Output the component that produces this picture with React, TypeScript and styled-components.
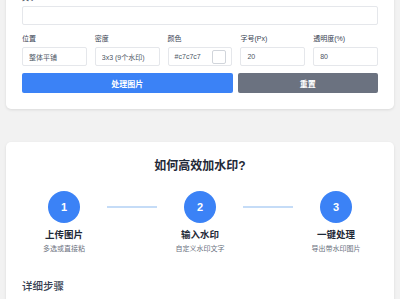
import { Fragment } from "react";
import styled, { createGlobalStyle } from "styled-components";

const GlobalStyle = createGlobalStyle`
  body {
    margin: 0;
    background: #f2f2f2;
    font-family: "Liberation Sans", "Noto Sans CJK SC", sans-serif;
    overflow: hidden;
  }
`;

const Page = styled.div`
  padding: 0 6px;
`;

const Card = styled.section<{ $top?: number }>`
  margin-top: ${(p) => p.$top ?? 0}px;
  background: #ffffff;
  border-radius: 5px;
  box-shadow: 0 1px 3px rgba(0, 0, 0, 0.1);
  padding: 16px;
`;

const Label = styled.div`
  font-size: 7px;
  line-height: 10px;
  color: #374151;
  margin-bottom: 3px;
`;

const TextBox = styled.input`
  box-sizing: border-box;
  display: block;
  width: 100%;
  height: 19px;
  padding: 0 6px;
  border: 1px solid #e5e7eb;
  border-radius: 2px;
  font-family: inherit;
  font-size: 7px;
  color: #4b5563;
  background: #fff;
  outline: none;
`;

const ColorBox = styled.div`
  box-sizing: border-box;
  display: flex;
  align-items: center;
  justify-content: space-between;
  height: 19px;
  padding: 0 5px 0 6px;
  border: 1px solid #e5e7eb;
  border-radius: 2px;
  font-size: 7px;
  color: #4b5563;
`;

const Swatch = styled.span<{ $color: string }>`
  width: 12px;
  height: 12px;
  border: 1px solid #d1d5db;
  border-radius: 2px;
  background: ${(p) => p.$color};
`;

const FieldGrid = styled.div`
  display: grid;
  grid-template-columns: repeat(5, 1fr);
  gap: 8px;
  margin-top: 9px;
`;

const ButtonRow = styled.div`
  display: flex;
  gap: 5px;
  margin-top: 7px;
`;

const Button = styled.button<{ $primary?: boolean }>`
  flex: ${(p) => (p.$primary ? 1.545 : 1)};
  height: 20px;
  border: none;
  border-radius: 2px;
  background: ${(p) => (p.$primary ? "#3b82f6" : "#6b7280")};
  color: #ffffff;
  font-family: inherit;
  font-size: 8px;
  font-weight: 700;
`;

const Title = styled.h2`
  margin: 0;
  text-align: center;
  font-size: 12px;
  line-height: 16px;
  font-weight: 700;
  color: #1f2937;
`;

const Steps = styled.div`
  display: flex;
  align-items: flex-start;
  margin-top: 17px;
`;

const Step = styled.div`
  width: 84px;
  display: flex;
  flex-direction: column;
  align-items: center;
`;

const Circle = styled.div`
  width: 32px;
  height: 32px;
  border-radius: 50%;
  background: #3b82f6;
  color: #ffffff;
  display: flex;
  align-items: center;
  justify-content: center;
  font-size: 11px;
  font-weight: 700;
`;

const Connector = styled.div`
  flex: 1;
  height: 2px;
  margin: 15px 1px 0;
  background: #c5dcf7;
`;

const StepTitle = styled.div`
  margin-top: 5px;
  font-size: 9.5px;
  line-height: 13px;
  font-weight: 700;
  color: #1f2937;
`;

const StepText = styled.div`
  margin-top: 3px;
  font-size: 7px;
  line-height: 10px;
  color: #6b7280;
`;

const SubHeading = styled.h3`
  margin: 25px 0 0;
  font-size: 10.5px;
  line-height: 14px;
  font-weight: 500;
  color: #374151;
`;

const fields = [
  { label: "位置", value: "整体平铺" },
  { label: "密度", value: "3x3 (9个水印)" },
  { label: "颜色", value: "#c7c7c7", color: "#ffffff" },
  { label: "字号(Px)", value: "20" },
  { label: "透明度(%)", value: "80" },
];

const steps = [
  { n: "1", title: "上传图片", text: "多选或直接粘" },
  { n: "2", title: "输入水印", text: "自定义水印文字" },
  { n: "3", title: "一键处理", text: "导出带水印图片" },
];

export default function App() {
  return (
    <Page>
      <GlobalStyle />
      <Card $top={-23}>
        <Label>文字</Label>
        <TextBox readOnly defaultValue="" />
        <FieldGrid>
          {fields.map((f) => (
            <div key={f.label}>
              <Label>{f.label}</Label>
              {f.color ? (
                <ColorBox>
                  {f.value}
                  <Swatch $color={f.color} />
                </ColorBox>
              ) : (
                <TextBox readOnly defaultValue={f.value} />
              )}
            </div>
          ))}
        </FieldGrid>
        <ButtonRow>
          <Button $primary>处理图片</Button>
          <Button>重置</Button>
        </ButtonRow>
      </Card>
      <Card $top={33}>
        <Title>如何高效加水印?</Title>
        <Steps>
          {steps.map((s, i) => (
            <Fragment key={s.n}>
              {i > 0 && <Connector />}
              <Step>
                <Circle>{s.n}</Circle>
                <StepTitle>{s.title}</StepTitle>
                <StepText>{s.text}</StepText>
              </Step>
            </Fragment>
          ))}
        </Steps>
        <SubHeading>详细步骤</SubHeading>
      </Card>
    </Page>
  );
}
